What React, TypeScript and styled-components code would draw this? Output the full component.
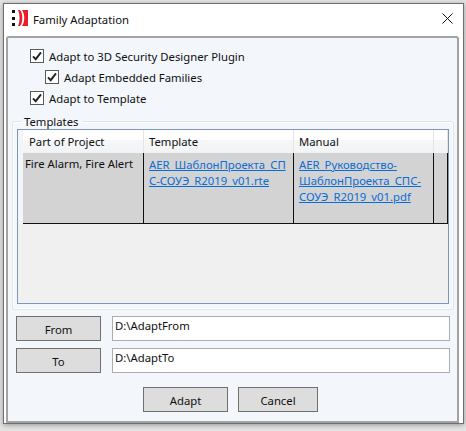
import React from "react";
import styled, { createGlobalStyle } from "styled-components";

const Global = createGlobalStyle`
  html, body { margin: 0; padding: 0; width: 466px; height: 431px; overflow: hidden; background: #e4e4e4; }
  #root { width: 466px; height: 431px; }
  * { box-sizing: border-box; }
`;

const Page = styled.div`
  width: 466px;
  height: 431px;
  padding: 3px 2px 7px 3px;
  font-family: "Noto Sans", "Open Sans", sans-serif;
  font-size: 11.3px;
  color: #101010;
`;

const Win = styled.div`
  width: 461px;
  height: 421px;
  display: flex;
  flex-direction: column;
  background: #fff;
  border: 1px solid #6e6e6e;
  box-shadow: 0 1px 5px rgba(0, 0, 0, 0.35);
`;

const TitleBar = styled.div`
  height: 32px;
  flex: none;
  display: flex;
  align-items: center;
  padding: 0 10px 2px 8px;
`;

const TitleText = styled.span`
  margin-left: 5px;
  flex: 1;
`;

const TitleIcon = styled.svg`
  flex: none;
  margin-bottom: 2px;
`;

const Panel = styled.div`
  margin: 0 4px 0 2px;
  height: 387px;
  display: flex;
  flex-direction: column;
  background: #f3f6fb;
  border: 2px solid #a3a3a3;
  border-radius: 3px 3px 0 0;
  padding: 0 3px;
`;

const Options = styled.div`
  display: flex;
  flex-direction: column;
  gap: 3px;
  padding: 9px 0 0 19px;
  height: 77px;
  flex: none;
`;

const OptionRow = styled.label<{ $indent?: boolean }>`
  display: flex;
  align-items: center;
  gap: 5px;
  height: 18px;
  margin-left: ${(p) => (p.$indent ? 15 : 0)}px;
`;

const CheckBox = styled.span`
  width: 14px;
  height: 14px;
  display: flex;
  align-items: center;
  justify-content: center;
  background: #fff;
  border: 1px solid #5a5a5a;
  flex: none;
`;

const Group = styled.fieldset`
  margin: 0 0 6px 1px;
  padding: 0 4px 5px;
  height: 195px;
  flex: none;
  border: 1px solid #dfe5ec;
  border-radius: 3px;
  box-shadow: inset 0 0 0 1px #fff;
  min-width: 0;
`;

const Legend = styled.legend`
  padding: 0 3px;
  margin-left: 4px;
  line-height: 13px;
`;

const Table = styled.div`
  width: 432px;
  height: 175px;
  margin-top: 1px;
  border: 1px solid #7c98b6;
  background: #f0f0f0;
  display: grid;
  grid-template-columns: 5px 121px 150px 140px 1fr;
  grid-template-rows: 23px 71px;
`;

const HeadCell = styled.div<{ $left?: number }>`
  background: linear-gradient(#ffffff 0, #ffffff 45%, #f5f7f9 45%, #f1f3f5 100%);
  border-right: 1px solid #e3e5e8;
  padding: 4px 0 0 ${(p) => p.$left ?? 5}px;
`;

const RowGutter = styled.div`
  background: #f3f5f7;
`;

const Cell = styled.div<{ $left?: number; $top?: number }>`
  background: #d3d3d3;
  border-right: 1px solid #101010;
  border-bottom: 1px solid #101010;
  padding: ${(p) => p.$top ?? 4}px 4px 0 ${(p) => p.$left ?? 5}px;
  line-height: 16px;
  word-break: break-word;
`;

const Link = styled.a`
  color: #0a6cd6;
  text-decoration: underline;
`;

const PathRow = styled.div`
  display: flex;
  gap: 11px;
  height: 25px;
  margin: 0 4px 7px 5px;
  flex: none;
`;

const Button = styled.button<{ $w: number }>`
  width: ${(p) => p.$w}px;
  height: 25px;
  padding: 2px 0 0;
  flex: none;
  font: inherit;
  color: #101010;
  background: #dddddd;
  border: 1px solid #707070;
`;

const PathField = styled.div`
  flex: 1;
  background: #fff;
  border: 1px solid #abadb3;
  padding: 0 2px;
  line-height: 17px;
`;

const Actions = styled.div`
  display: flex;
  gap: 10px;
  padding-left: 132px;
  margin-top: 7px;
`;

const Check = () => (
  <svg width="12" height="12" viewBox="0 0 12 12">
    <path d="M2 6.3 L4.7 9.2 L10 2.3" fill="none" stroke="#222" strokeWidth="1.9" />
  </svg>
);

const Logo = () => (
  <TitleIcon width="16" height="16" viewBox="0 0 16 16">
    <rect x="0" y="0" width="3" height="3" fill="#111" />
    <rect x="0" y="7" width="3" height="3" fill="#111" />
    <rect x="0" y="13" width="3" height="3" fill="#111" />
    <path d="M6 0 H8 C11 3 11 13 8 16 H6 C8 12 8 4 6 0 Z" fill="#ee1c25" />
    <path d="M10 0 H16 V16 H10 C13 12 13 4 10 0 Z" fill="#ee1c25" />
  </TitleIcon>
);

const Close = () => (
  <TitleIcon width="11" height="11" viewBox="0 0 11 11">
    <path d="M0.5 0.5 L10.5 10.5 M10.5 0.5 L0.5 10.5" stroke="#111" strokeWidth="1" />
  </TitleIcon>
);

const options = [
  { text: "Adapt to 3D Security Designer Plugin" },
  { text: "Adapt Embedded Families", indent: true },
  { text: "Adapt to Template" },
];

export default function App() {
  return (
    <Page>
      <Global />
      <Win>
        <TitleBar>
          <Logo />
          <TitleText>Family Adaptation</TitleText>
          <Close />
        </TitleBar>
        <Panel>
          <Options>
            {options.map((o) => (
              <OptionRow key={o.text} $indent={o.indent}>
                <CheckBox>
                  <Check />
                </CheckBox>
                {o.text}
              </OptionRow>
            ))}
          </Options>
          <Group>
            <Legend>Templates</Legend>
            <Table>
              <RowGutter />
              <HeadCell $left={6}>Part of Project</HeadCell>
              <HeadCell>Template</HeadCell>
              <HeadCell>Manual</HeadCell>
              <HeadCell />
              <RowGutter />
              <Cell $left={2} $top={3}>Fire Alarm, Fire Alert</Cell>
              <Cell>
                <Link>AER_ШаблонПроекта_СПС-СОУЭ_R2019_v01.rte</Link>
              </Cell>
              <Cell>
                <Link>AER_Руководство-ШаблонПроекта_СПС-СОУЭ_R2019_v01.pdf</Link>
              </Cell>
              <Cell />
            </Table>
          </Group>
          <PathRow>
            <Button $w={85}>From</Button>
            <PathField>D:\AdaptFrom</PathField>
          </PathRow>
          <PathRow>
            <Button $w={85}>To</Button>
            <PathField>D:\AdaptTo</PathField>
          </PathRow>
          <Actions>
            <Button $w={85}>Adapt</Button>
            <Button $w={80}>Cancel</Button>
          </Actions>
        </Panel>
      </Win>
    </Page>
  );
}
